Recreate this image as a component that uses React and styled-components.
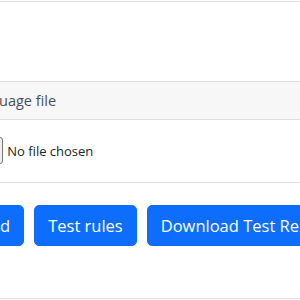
import React from "react";
import styled, { createGlobalStyle } from "styled-components";

const GlobalStyle = createGlobalStyle`
  html, body {
    margin: 0;
    padding: 0;
    background: #fff;
  }
  body {
    font-family: "Open Sans", "Noto Sans", sans-serif;
    color: #212529;
  }
`;

const Viewport = styled.div`
  width: 300px;
  height: 300px;
  overflow: hidden;
`;

const Card = styled.div`
  width: 640px;
  margin-left: -${(p) => p.offset}px;
  margin-top: 1px;
  border-top: 1px solid #dfdfdf;
  border-bottom: 1px solid #dfdfdf;
`;

const Blank = styled.div`
  height: 79px;
`;

const CardHeader = styled.div`
  height: 37px;
  display: flex;
  align-items: center;
  padding: 0 16px;
  background: #f7f7f7;
  border-top: 1px solid #dfdfdf;
  border-bottom: 1px solid #dfdfdf;
  font-size: 14.5px;
  color: #495057;
`;

const CardBody = styled.div`
  padding: 17px 16px 0;
  height: 161px;
`;

const FileRow = styled.label`
  display: flex;
  align-items: center;
  gap: 4px;
  font-size: 13px;
  color: #212529;
`;

const FileButton = styled.span`
  height: 25px;
  padding: 0 7px;
  display: flex;
  align-items: center;
  border: 1px solid #767676;
  border-radius: 3px;
  background: #efefef;
  font-size: 13px;
`;

const Divider = styled.hr`
  margin: 18px -16px 22px;
  border: 0;
  border-top: 1px solid #dfdfdf;
`;

const ButtonRow = styled.div`
  display: flex;
  gap: 10px;
`;

const Button = styled.button`
  height: 41px;
  padding: 0 13px;
  border: 1px solid #0d6efd;
  border-radius: 5px;
  background: #0d6efd;
  color: #fff;
  font-family: inherit;
  font-size: 16.5px;
  white-space: nowrap;
`;

export default function App() {
  return (
    <Viewport>
      <GlobalStyle />
      <Card offset={98}>
        <Blank />
        <CardHeader>Upload language file</CardHeader>
        <CardBody>
          <FileRow>
            <FileButton>Choose File</FileButton>
            No file chosen
          </FileRow>
          <Divider />
          <ButtonRow>
            <Button>Download</Button>
            <Button>Test rules</Button>
            <Button>Download Test Report</Button>
          </ButtonRow>
        </CardBody>
      </Card>
    </Viewport>
  );
}
